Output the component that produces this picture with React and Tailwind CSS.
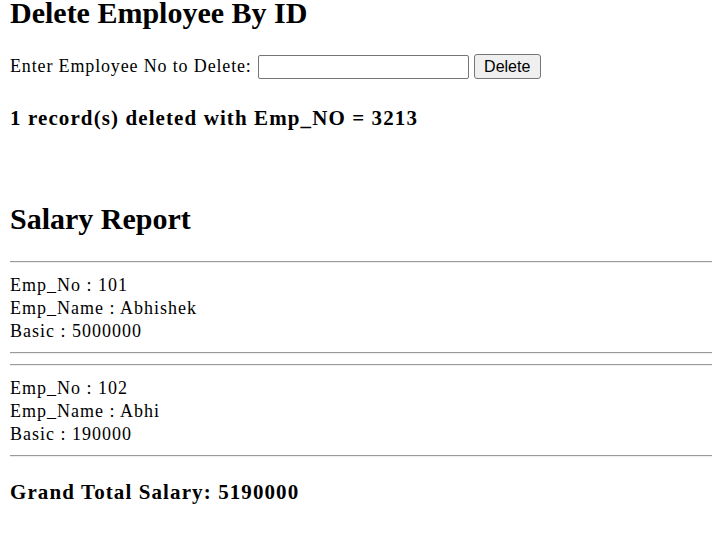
import React from 'react';

const employees = [
  { no: 101, name: 'Abhishek', basic: 5000000 },
  { no: 102, name: 'Abhi', basic: 190000 },
];

function Rule({ className = '' }) {
  return <div className={`h-[2px] border-t border-t-[#9a9a9a] border-b border-b-[#eeeeee] ${className}`} />;
}

export default function App() {
  const total = employees.reduce((sum, e) => sum + e.basic, 0);

  return (
    <div className="min-h-[553px] bg-white pl-[10px] text-black font-['Liberation_Serif','Times_New_Roman',serif]">
      {/* Delete form */}
      <h1 className="text-[30px] leading-[26px] font-bold">Delete Employee By ID</h1>

      <div className="mt-[28px] flex h-[25px] items-center">
        <span className="text-[18px] leading-[25px] tracking-[0.85px]">Enter Employee No to Delete:</span>
        <input
          type="text"
          className="ml-[6px] h-[24px] w-[211px] rounded-[2px] border border-[#767676] bg-white px-1 text-[16px] outline-none"
        />
        <button className="ml-[5px] h-[25px] w-[67px] rounded-[3px] border border-[#767676] bg-[#efefef] text-[16px] font-['Liberation_Sans',Arial,sans-serif] text-black">
          Delete
        </button>
      </div>

      <h3 className="mt-[27px] text-[21px] leading-[24px] tracking-[1.1px] font-bold">1 record(s) deleted with Emp_NO = 3213</h3>

      {/* Report */}
      <h1 className="mt-[76px] text-[30px] leading-[26px] font-bold">Salary Report</h1>

      <Rule className="mt-[29px]" />
      {employees.map((e, i) => (
        <div key={e.no}>
          {i > 0 && <Rule className="mt-[10px]" />}
          <div className="mt-[11px] text-[18px] leading-[23px] tracking-[1px]">
            <div>Emp_No : {e.no}</div>
            <div>Emp_Name : {e.name}</div>
            <div>Basic : {e.basic}</div>
          </div>
          <Rule className="mt-[9px]" />
        </div>
      ))}

      <h3 className="mt-[23px] text-[21px] leading-[24px] tracking-[1.1px] font-bold">Grand Total Salary: {total}</h3>
    </div>
  );
}
